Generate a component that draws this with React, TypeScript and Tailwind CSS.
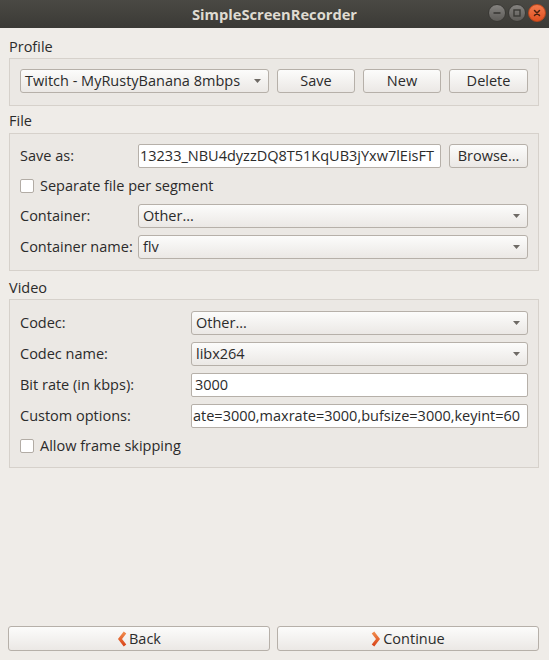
import React from "react";

const font = { fontFamily: '"Open Sans", "Noto Sans", sans-serif' };

function Arrow() {
  return (
    <svg width="9" height="8" viewBox="0 0 9 8" className="ml-auto shrink-0">
      <path d="M1 2 L8 2 L4.5 6 Z" fill="#6e6a65" />
    </svg>
  );
}

function Combo({ text, className = "" }: { text: string; className?: string }) {
  return (
    <div
      className={`flex h-[24px] items-center rounded-[3px] border border-[#b6b0a9] bg-gradient-to-b from-[#fcfcfb] to-[#ebe8e5] pl-[4px] pr-[6px] text-[14.5px] text-[#2b2b2b] ${className}`}
    >
      <span className="whitespace-nowrap leading-none">{text}</span>
      <Arrow />
    </div>
  );
}

function Button({ children, className = "" }: { children: React.ReactNode; className?: string }) {
  return (
    <div
      className={`flex h-[24px] items-center justify-center rounded-[3px] border border-[#b6b0a9] bg-gradient-to-b from-[#fcfcfb] to-[#ebe8e5] text-[14.5px] text-[#2b2b2b] ${className}`}
    >
      {children}
    </div>
  );
}

function Input({ text, className = "", pl = "pl-[1px]" }: { text: string; className?: string; pl?: string }) {
  return (
    <div
      className={`flex h-[24px] items-center overflow-hidden rounded-[2px] border border-[#b6b0a9] bg-white ${pl} text-[14.5px] text-[#2b2b2b] ${className}`}
    >
      <span className="whitespace-nowrap leading-none">{text}</span>
    </div>
  );
}

function Check({ label }: { label: string }) {
  return (
    <div className="flex h-[22px] items-center">
      <div className="h-[14px] w-[14px] rounded-[2px] border border-[#b2aca5] bg-white" />
      <span className="ml-[6px] text-[14.5px] leading-none text-[#2b2b2b]">{label}</span>
    </div>
  );
}

function Row({ label, labelW, children }: { label: string; labelW: string; children: React.ReactNode }) {
  return (
    <div className="flex items-center">
      <div className={`${labelW} shrink-0 text-[14.5px] leading-none text-[#2b2b2b]`}>{label}</div>
      <div className="flex min-w-0 flex-1">{children}</div>
    </div>
  );
}

function SectionLabel({ text, className = "" }: { text: string; className?: string }) {
  return <div className={`h-[20px] text-[14.5px] leading-[20px] text-[#2b2b2b] ${className}`}>{text}</div>;
}

function WinBtn({ kind }: { kind: "min" | "max" | "close" }) {
  const close = kind === "close";
  return (
    <div
      className={`flex h-[18px] w-[18px] items-center justify-center rounded-full ${
        close
          ? "bg-gradient-to-b from-[#f27a4c] to-[#e0501f] border border-[#b9461c]"
          : "bg-gradient-to-b from-[#858380] to-[#5d5b57] border border-[#3a3935]"
      }`}
    >
      <svg width="10" height="10" viewBox="0 0 10 10">
        {kind === "min" && <rect x="1.5" y="4.2" width="7" height="1.6" fill="#3a3935" />}
        {kind === "max" && <rect x="2" y="2" width="6" height="6" fill="none" stroke="#3a3935" strokeWidth="1.4" />}
        {kind === "close" && (
          <path d="M2.5 2.5 L7.5 7.5 M7.5 2.5 L2.5 7.5" stroke="#4a2110" strokeWidth="1.5" strokeLinecap="round" />
        )}
      </svg>
    </div>
  );
}

function Chevron({ dir }: { dir: "left" | "right" }) {
  const d = dir === "left" ? "M8 1.5 L3 8 L8 14.5" : "M2 1.5 L7 8 L2 14.5";
  return (
    <svg width="10" height="16" viewBox="0 0 10 16" className="shrink-0">
      <defs>
        <linearGradient id={`g${dir}`} x1="0" y1="0" x2="0" y2="1">
          <stop offset="0" stopColor="#f08a4b" />
          <stop offset="1" stopColor="#d9451a" />
        </linearGradient>
      </defs>
      <path d={d} fill="none" stroke={`url(#g${dir})`} strokeWidth="3.2" strokeLinejoin="miter" strokeLinecap="butt" />
    </svg>
  );
}

export default function App() {
  return (
    <div className="flex h-[660px] w-[549px] flex-col overflow-hidden bg-[#efece8]" style={font}>
      {/* title bar */}
      <div className="relative flex h-[28px] shrink-0 items-center justify-center bg-gradient-to-b from-[#4a4944] to-[#3b3a36]">
        <span className="text-[14.7px] font-bold text-[#dfdbd2]">SimpleScreenRecorder</span>
        <div className="absolute right-[3px] top-[4px] flex gap-[2px]">
          <WinBtn kind="min" />
          <WinBtn kind="max" />
          <WinBtn kind="close" />
        </div>
      </div>

      <div className="ml-[9px] mr-[10px] flex flex-col">
        {/* Profile */}
        <SectionLabel text="Profile" className="mt-[9px]" />
        <div className="mt-[1px] flex h-[48px] items-center gap-[8px] border border-[#d6d1cb] bg-[#ebe8e4] pl-[10px] pr-[10px] pb-[2px]">
          <Combo text="Twitch - MyRustyBanana 8mbps" className="w-[249px]" />
          <Button className="w-[78px]">Save</Button>
          <Button className="w-[78px]">New</Button>
          <Button className="w-[79px]">Delete</Button>
        </div>

        {/* File */}
        <SectionLabel text="File" className="mt-[5px]" />
        <div className="mt-[2px] flex flex-col gap-[7px] border border-[#d6d1cb] bg-[#ebe8e4] pb-[11px] pl-[10px] pr-[10px] pt-[10px]">
          <Row label="Save as:" labelW="w-[118px]">
            <Input text="13233_NBU4dyzzDQ8T51KqUB3jYxw7lEisFT" className="flex-1" />
            <Button className="ml-[8px] w-[79px] shrink-0">Browse...</Button>
          </Row>
          <Check label="Separate file per segment" />
          <Row label="Container:" labelW="w-[118px]">
            <Combo text="Other..." className="flex-1" />
          </Row>
          <Row label="Container name:" labelW="w-[118px]">
            <Combo text="flv" className="flex-1" />
          </Row>
        </div>

        {/* Video */}
        <SectionLabel text="Video" className="mt-[7px]" />
        <div className="mt-[1px] flex flex-col gap-[7px] border border-[#d6d1cb] bg-[#ebe8e4] pb-[10px] pl-[10px] pr-[10px] pt-[11px]">
          <Row label="Codec:" labelW="w-[171px]">
            <Combo text="Other..." className="flex-1" />
          </Row>
          <Row label="Codec name:" labelW="w-[171px]">
            <Combo text="libx264" className="flex-1" />
          </Row>
          <Row label="Bit rate (in kbps):" labelW="w-[171px]">
            <Input text="3000" className="flex-1" pl="pl-[3px]" />
          </Row>
          <Row label="Custom options:" labelW="w-[171px]">
            <Input text="ate=3000,maxrate=3000,bufsize=3000,keyint=60" className="flex-1" />
          </Row>
          <Check label="Allow frame skipping" />
        </div>
      </div>

      <div className="flex-1" />

      {/* bottom buttons */}
      <div className="mb-[9px] ml-[8px] mr-[10px] flex gap-[7px]">
        <Button className="h-[25px] flex-1">
          <Chevron dir="left" />
          <span className="ml-[2px]">Back</span>
        </Button>
        <Button className="h-[25px] flex-1">
          <Chevron dir="right" />
          <span className="ml-[2px]">Continue</span>
        </Button>
      </div>
    </div>
  );
}
